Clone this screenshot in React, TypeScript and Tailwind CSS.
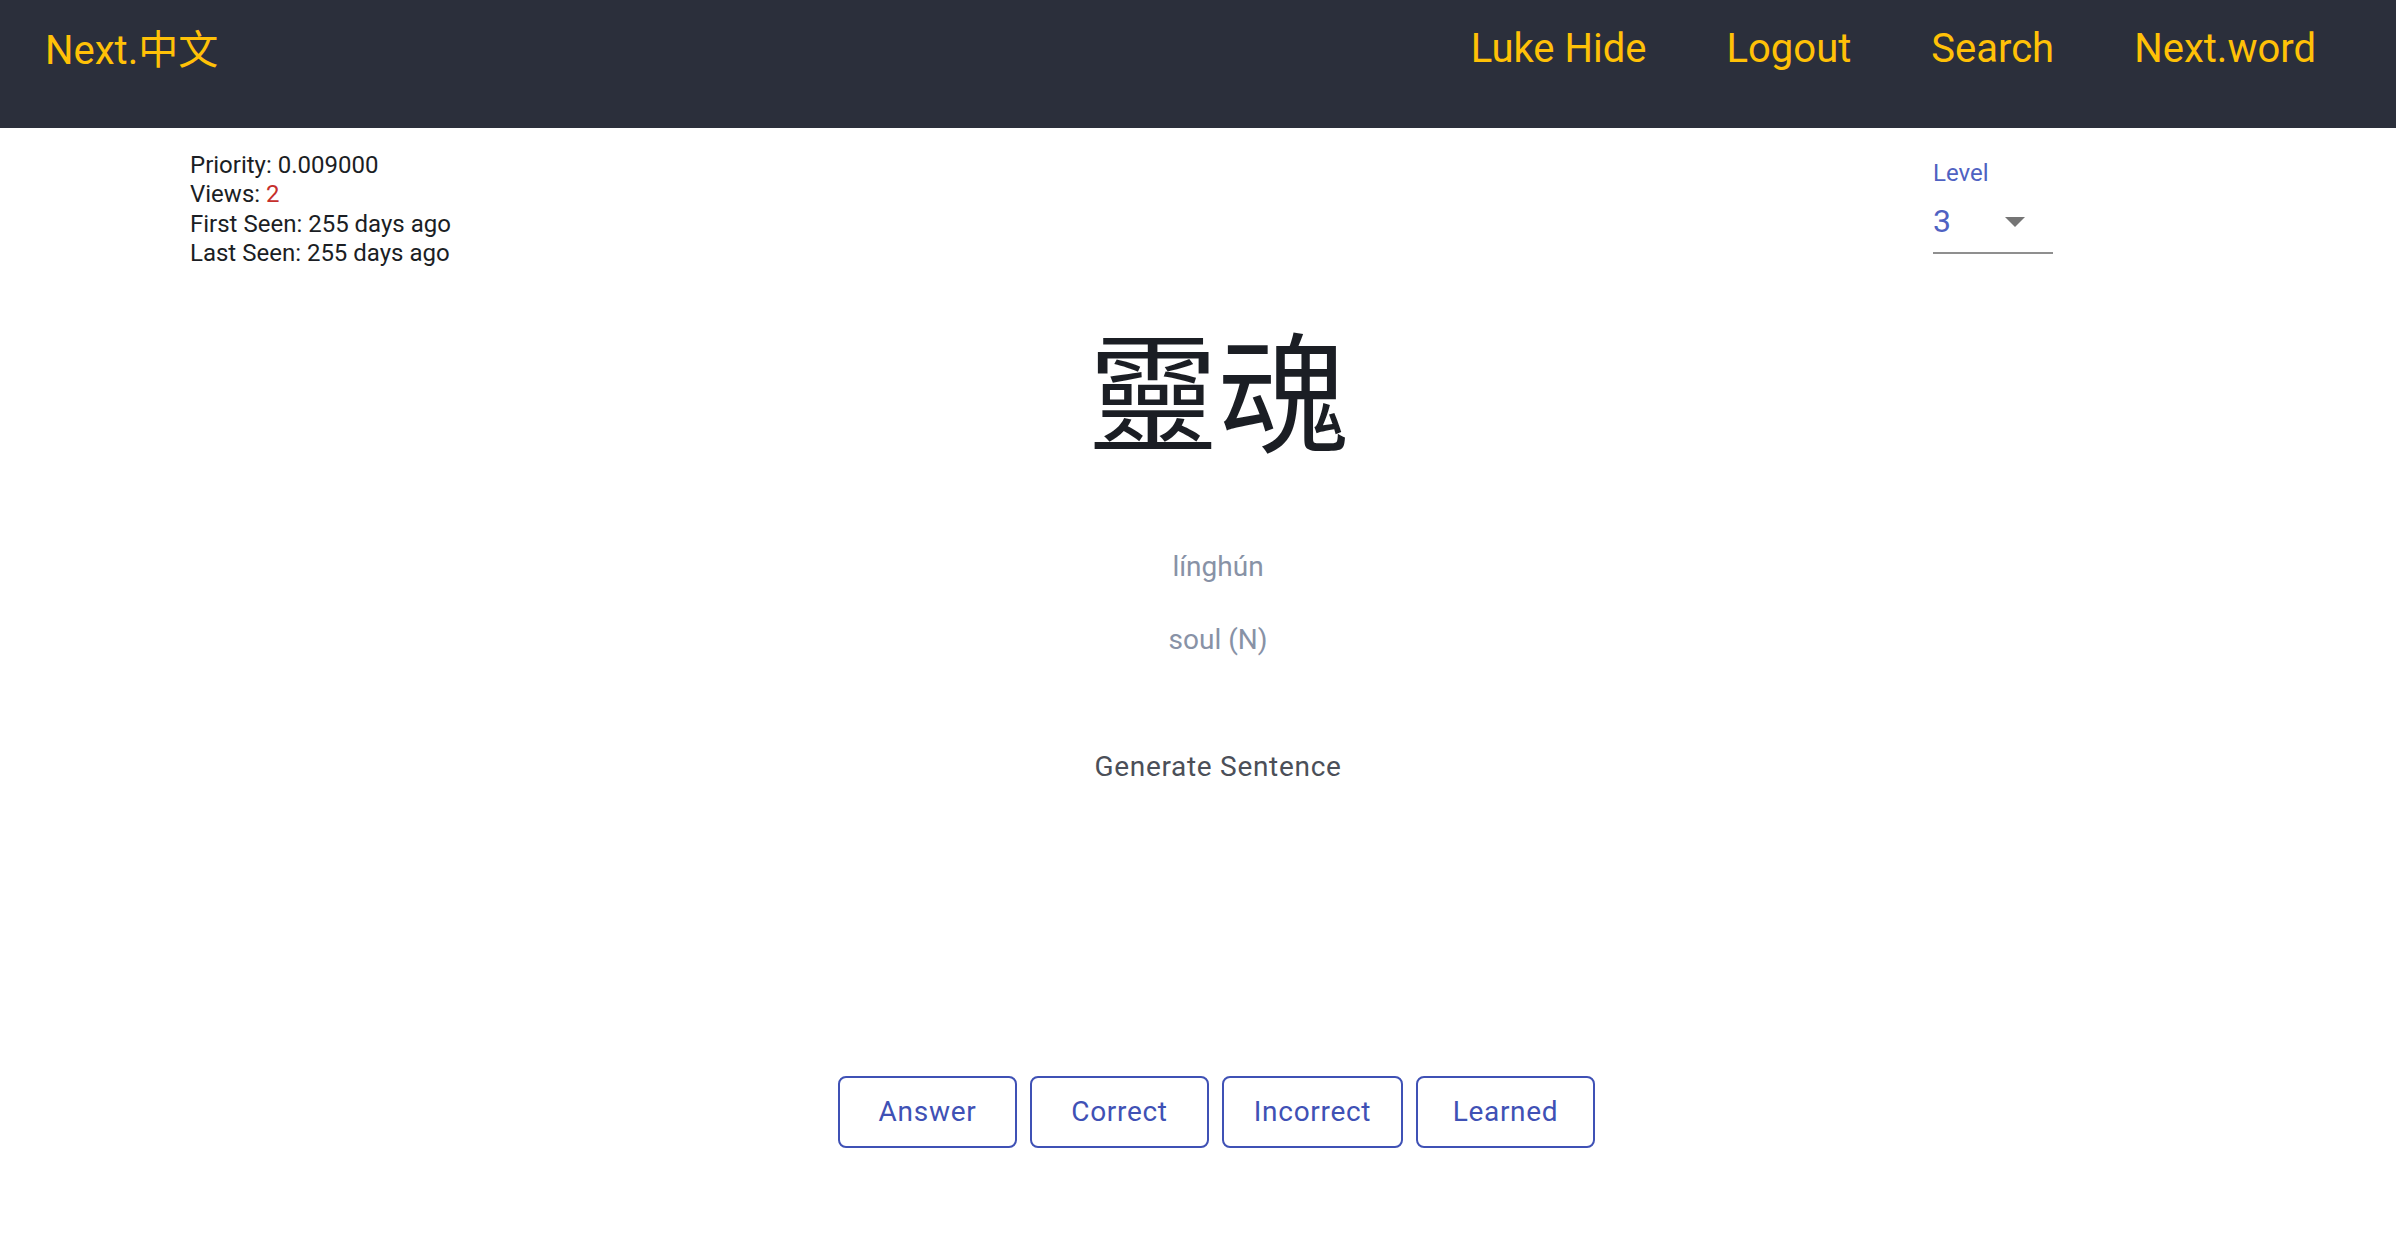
import React from "react";

const roboto = { fontFamily: "Roboto, 'Noto Sans CJK TC', sans-serif" } as React.CSSProperties;

export default function App() {
  return (
    <div className="min-h-[1246px] w-full bg-white" style={roboto}>
      <header className="flex h-[128px] w-full items-start justify-between bg-[#2b2f3b] pl-[45px] pr-[80px] pt-[29px] text-[40px] leading-[40px] text-[#ffc107]">
        <div className="mt-[2px]">Next.中文</div>
        <nav className="flex gap-[80px]">
          <span>Luke Hide</span>
          <span>Logout</span>
          <span>Search</span>
          <span>Next.word</span>
        </nav>
      </header>

      <div className="flex items-start justify-between pl-[190px] pr-[343px] pt-[23px]">
        <div className="text-[24px] leading-[29.4px] text-[#1b1e24]">
          <div>Priority: 0.009000</div>
          <div>
            Views: <span className="text-[#c62f2c]">2</span>
          </div>
          <div>First Seen: 255 days ago</div>
          <div>Last Seen: 255 days ago</div>
        </div>
        <div className="mt-[10px] flex w-[120px] flex-col">
          <div className="text-[24px] leading-[24px] text-[#4f62c2]">Level</div>
          <div className="mt-[20px] flex h-[32px] items-center justify-between">
            <span className="text-[32px] leading-[32px] text-[#4f62c2]">3</span>
            <svg width="20" height="10" viewBox="0 0 20 10" className="mr-[28px] mt-[2px]">
              <polygon points="0,0 20,0 10,10" fill="#757575" />
            </svg>
          </div>
          <div className="mt-[15px] h-[2px] w-full bg-[#8f8f8f]" />
        </div>
      </div>

      <main className="flex flex-col items-center pl-[40px]">
        <div
          className="mt-[51px] text-[130px] leading-[130px] text-[#1b1e24]"
          style={{ fontFamily: "'Noto Sans CJK TC', 'Noto Sans CJK SC', sans-serif" }}
        >
          靈魂
        </div>
        <div className="mt-[103px] text-[28px] leading-[28px] text-[#8892a6]">línghún</div>
        <div className="mt-[45px] text-[28px] leading-[28px] text-[#8892a6]">soul (N)</div>
        <div className="mt-[99px] text-[28px] leading-[28px] tracking-[0.7px] text-[#4b4f58]">
          Generate Sentence
        </div>
        <div className="mt-[295px] flex gap-[13px] pr-[3px]">
          {[
            ["Answer", "w-[179px]"],
            ["Correct", "w-[179px]"],
            ["Incorrect", "w-[181px]"],
            ["Learned", "w-[179px]"],
          ].map(([label, w]) => (
            <button
              key={label}
              className={`${w} flex h-[72px] items-center justify-center rounded-[8px] border-2 border-[#3f51b5] text-[28px] tracking-[0.7px] text-[#3f51b5]`}
            >
              {label}
            </button>
          ))}
        </div>
      </main>
    </div>
  );
}
